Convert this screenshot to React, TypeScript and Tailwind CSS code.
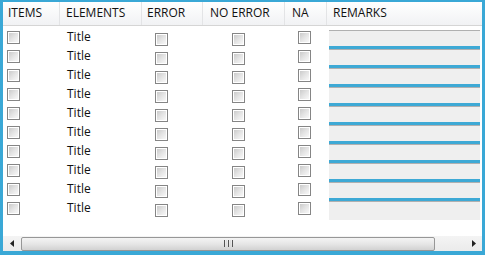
const rows = Array.from({ length: 10 }, (_, i) => i)

function Check() {
  return (
    <div className="w-[13px] h-[13px] border border-[#858585] bg-white p-px">
      <div className="w-full h-full bg-gradient-to-br from-[#cbcbcb] via-[#e4e4e4] to-[#f8f8f8]" />
    </div>
  )
}

export default function App() {
  return (
    <div className="w-[485px] h-[255px] bg-white border-[#3aa8d6] border-l-[3px] border-r-[3px] border-t-2 border-b-4 flex flex-col text-[12px] text-[#111] font-['Open_Sans',sans-serif] overflow-hidden">
      {/* header */}
      <div className="h-[24px] flex bg-gradient-to-b from-white to-[#f1f2f4] border-b border-[#d5d5d5] leading-[22px] shrink-0">
        <div className="w-[57px] pl-[5px] border-r border-[#e3e4e6]">ITEMS</div>
        <div className="w-[82px] pl-[6px] border-r border-[#e3e4e6]">ELEMENTS</div>
        <div className="w-[61px] pl-[5px] border-r border-[#e3e4e6]">ERROR</div>
        <div className="w-[82px] pl-[7px] border-r border-[#e3e4e6]">NO ERROR</div>
        <div className="w-[42px] pl-[7px] border-r border-[#e3e4e6]">NA</div>
        <div className="flex-1 pl-[6px]">REMARKS</div>
      </div>

      {/* body */}
      <div className="flex-1 pt-[4px]">
        {rows.map((i) => (
          <div key={i} className="h-[19px] flex">
            <div className="w-[57px] pl-[4px] pt-px">
              <Check />
            </div>
            <div className="w-[82px] pl-[7px] leading-[13px]">Title</div>
            <div className="w-[61px] pl-[13px] pt-[3px]">
              <Check />
            </div>
            <div className="w-[82px] pl-[29px] pt-[3px]">
              <Check />
            </div>
            <div className="w-[42px] pl-[13px] pt-px">
              <Check />
            </div>
            <div className="flex-1 pl-[2px] pr-[2px]">
              <div
                className={`h-full bg-[#efefef] border-t border-[#b0b0b0] ${
                  i < 9 ? "border-b-[3px] border-b-[#3ea9d5]" : "h-[16px]"
                }`}
              />
            </div>
          </div>
        ))}
      </div>

      {/* horizontal scrollbar */}
      <div className="h-[15px] shrink-0 flex items-center bg-gradient-to-b from-[#f4f4f4] to-[#ebebeb]">
        <div className="w-[18px] flex justify-center">
          <svg width="4" height="7" viewBox="0 0 4 7">
            <path d="M4 0 L0 3.5 L4 7 Z" fill="#222" />
          </svg>
        </div>
        <div className="w-[414px] h-[14px] border border-[#979797] rounded-[2px] bg-gradient-to-b from-[#f4f4f4] via-[#e6e6e6] to-[#d2d2d2] flex items-center justify-center gap-px">
          <div className="w-px h-[7px] bg-[#555]" />
          <div className="w-px h-[7px] bg-[#ddd]" />
          <div className="w-px h-[7px] bg-[#555]" />
          <div className="w-px h-[7px] bg-[#ddd]" />
          <div className="w-px h-[7px] bg-[#555]" />
        </div>
        <div className="flex-1 flex justify-end pr-[6px]">
          <svg width="4" height="7" viewBox="0 0 4 7">
            <path d="M0 0 L4 3.5 L0 7 Z" fill="#222" />
          </svg>
        </div>
      </div>
    </div>
  )
}
